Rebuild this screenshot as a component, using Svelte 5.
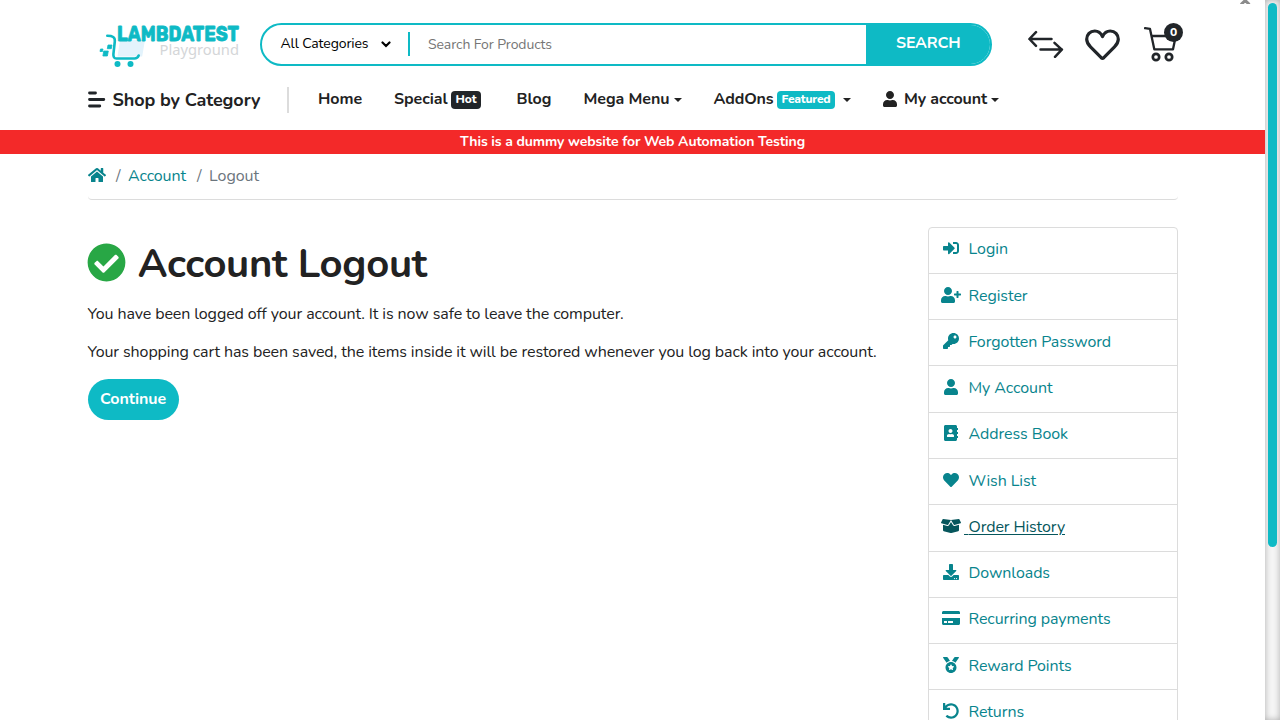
<script>
  const userPath = 'M224 256c70.7 0 128-57.3 128-128S294.7 0 224 0 96 57.3 96 128s57.3 128 128 128zm89.6 32h-16.7c-22.2 10.2-46.9 16-72.9 16s-50.6-5.8-72.9-16h-16.7C60.2 288 0 348.2 0 422.4V464c0 26.5 21.5 48 48 48h352c26.5 0 48-21.5 48-48v-41.6c0-74.2-60.2-134.4-134.4-134.4z';

  const icons = {
    user: [448, userPath],
    userPlus: [640, 'M624 208h-64v-64c0-8.8-7.2-16-16-16h-32c-8.8 0-16 7.2-16 16v64h-64c-8.8 0-16 7.2-16 16v32c0 8.8 7.2 16 16 16h64v64c0 8.8 7.2 16 16 16h32c8.8 0 16-7.2 16-16v-64h64c8.8 0 16-7.2 16-16v-32c0-8.8-7.2-16-16-16z' + userPath],
    signIn: [512, 'M416 448h-84c-6.6 0-12-5.4-12-12v-40c0-6.6 5.4-12 12-12h84c17.7 0 32-14.3 32-32V160c0-17.7-14.3-32-32-32h-84c-6.6 0-12-5.4-12-12V76c0-6.6 5.4-12 12-12h84c53 0 96 43 96 96v192c0 53-43 96-96 96zm-47-201L201 79c-15-15-41-4.5-41 17v96H24c-13.3 0-24 10.7-24 24v96c0 13.3 10.7 24 24 24h136v96c0 21.5 26 32 41 17l168-168c9.3-9.4 9.3-24.6 0-34z'],
    key: [512, 'M512 176.001C512 273.203 433.202 352 336 352c-11.22 0-22.19-1.062-32.827-3.069l-24.012 27.014A23.999 23.999 0 0 1 261.223 384H224v40c0 13.255-10.745 24-24 24h-40v40c0 13.255-10.745 24-24 24H24c-13.255 0-24-10.745-24-24v-78.059c0-6.365 2.529-12.47 7.029-16.971l161.802-161.802C163.108 213.814 160 195.271 160 176 160 78.798 238.797.001 335.999 0 433.488-.001 512 78.511 512 176.001zM336 128c0 26.51 21.49 48 48 48s48-21.49 48-48-21.49-48-48-48-48 21.49-48 48z'],
    book: [448, 'M436 160c6.6 0 12-5.4 12-12v-40c0-6.6-5.4-12-12-12h-20V48c0-26.5-21.5-48-48-48H48C21.5 0 0 21.5 0 48v416c0 26.5 21.5 48 48 48h320c26.5 0 48-21.5 48-48v-48h20c6.6 0 12-5.4 12-12v-40c0-6.6-5.4-12-12-12h-20v-64h20c6.6 0 12-5.4 12-12v-40c0-6.6-5.4-12-12-12h-20v-64h20zm-228-32c35.3 0 64 28.7 64 64s-28.7 64-64 64-64-28.7-64-64 28.7-64 64-64zm112 236.8c0 10.6-10 19.2-22.4 19.2H118.4C106 384 96 375.4 96 364.8v-19.2c0-31.8 30.1-57.6 67.2-57.6h5c12.3 5.1 25.7 8 39.8 8s27.6-2.9 39.8-8h5c37.1 0 67.2 25.8 67.2 57.6v19.2z'],
    heart: [512, 'M462.3 62.6C407.5 15.9 326 24.3 275.7 76.2L256 96.5l-19.7-20.3C186.1 24.3 104.5 15.9 49.7 62.6c-62.8 53.6-66.1 149.8-9.9 207.9l193.5 199.8c12.5 12.9 32.8 12.9 45.3 0l193.5-199.8c56.3-58.1 53-154.3-9.8-207.9z'],
    box: [640, 'M425.7 256c-16.9 0-32.8-9-41.4-23.4L320 126l-64.2 106.6c-8.7 14.5-24.6 23.5-41.5 23.5-4.5 0-9-.6-13.3-1.9L64 215v178c0 14.7 10 27.5 24.2 31l216.2 54.1c10.2 2.5 20.9 2.5 31 0L551.8 424c14.2-3.6 24.2-16.4 24.2-31V215l-137 39.1c-4.3 1.3-8.8 1.9-13.3 1.9zm212.6-112.2L586.8 41c-3.1-6.2-9.8-9.8-16.7-8.9L320 64l91.7 152.1c3.8 6.3 11.4 9.3 18.5 7.3l197.9-56.5c9.9-2.9 14.7-13.9 10.2-23.1zM53.2 41L1.7 143.8c-4.6 9.2.3 20.2 10.1 23l197.9 56.5c7.1 2 14.7-1 18.5-7.3L320 64 69.8 32.1c-6.9-.8-13.5 2.7-16.6 8.9z'],
    download: [512, 'M216 0h80c13.3 0 24 10.7 24 24v168h87.7c17.8 0 26.7 21.5 14.1 34.1L269.7 378.3c-7.5 7.5-19.8 7.5-27.3 0L90.1 226.1c-12.6-12.6-3.7-34.1 14.1-34.1H192V24c0-13.3 10.7-24 24-24zm296 376v112c0 13.3-10.7 24-24 24H24c-13.3 0-24-10.7-24-24V376c0-13.3 10.7-24 24-24h146.7l49 49c20.1 20.1 52.5 20.1 72.6 0l49-49H488c13.3 0 24 10.7 24 24zm-124 88c0-11-9-20-20-20s-20 9-20 20 9 20 20 20 20-9 20-20zm64 0c0-11-9-20-20-20s-20 9-20 20 9 20 20 20 20-9 20-20z'],
    card: [576, 'M0 432c0 26.5 21.5 48 48 48h480c26.5 0 48-21.5 48-48V256H0v176zm192-68c0-6.6 5.4-12 12-12h136c6.6 0 12 5.4 12 12v40c0 6.6-5.4 12-12 12H204c-6.6 0-12-5.4-12-12v-40zm-128 0c0-6.6 5.4-12 12-12h72c6.6 0 12 5.4 12 12v40c0 6.6-5.4 12-12 12H76c-6.6 0-12-5.4-12-12v-40zM576 80v48H0V80c0-26.5 21.5-48 48-48h480c26.5 0 48 21.5 48 48z'],
    medal: [512, 'M223.75 130.75L154.62 15.54A31.997 31.997 0 0 0 127.18 0H16.03C3.08 0-4.5 14.57 2.92 25.18l111.27 158.96c29.72-27.77 67.52-46.83 109.56-53.39zM495.97 0H384.82c-11.24 0-21.66 5.9-27.44 15.54l-69.13 115.21c42.04 6.56 79.84 25.62 109.56 53.38L509.08 25.18C516.5 14.57 508.92 0 495.97 0zM256 160c-97.2 0-176 78.8-176 176s78.8 176 176 176 176-78.8 176-176-78.8-176-176-176zm92.52 157.26l-37.93 36.96 8.97 52.22c1.6 9.36-8.26 16.51-16.65 12.09L256 393.88l-46.9 24.65c-8.4 4.45-18.25-2.74-16.65-12.09l8.97-52.22-37.93-36.96c-6.82-6.64-3.05-18.23 6.35-19.59l52.43-7.64 23.43-47.52c2.11-4.28 6.19-6.39 10.28-6.39 4.11 0 8.22 2.14 10.33 6.39l23.43 47.52 52.43 7.64c9.4 1.36 13.17 12.95 6.35 19.59z'],
    undo: [512, 'M212.333 224.333H12c-6.627 0-12-5.373-12-12V12C0 5.373 5.373 0 12 0h48c6.627 0 12 5.373 12 12v78.112C117.773 39.279 184.26 7.47 258.175 8.007c136.906.994 246.448 111.623 246.157 248.532C504.041 393.258 393.12 504 256.333 504c-64.089 0-122.496-24.313-166.51-64.215-5.099-4.622-5.334-12.554-.467-17.42l33.967-33.967c4.474-4.474 11.662-4.717 16.401-.525C170.76 415.336 211.58 432 256.333 432c97.268 0 176-78.716 176-176 0-97.267-78.716-176-176-176-58.496 0-110.28 28.476-142.274 72.333h98.274c6.627 0 12 5.373 12 12v48c0 6.627-5.373 12-12 12z'],
    home: [576, 'M280.37 148.26L96 300.11V464a16 16 0 0 0 16 16l112.06-.29a16 16 0 0 0 15.92-16V368a16 16 0 0 1 16-16h64a16 16 0 0 1 16 16v95.64a16 16 0 0 0 16 16.05L464 480a16 16 0 0 0 16-16V300L295.67 148.26a12.19 12.19 0 0 0-15.3 0zM571.6 251.47L488 182.56V44.05a12 12 0 0 0-12-12h-56a12 12 0 0 0-12 12v72.61L318.47 43a48 48 0 0 0-61 0L4.34 251.47a12 12 0 0 0-1.6 16.9l25.5 31A12 12 0 0 0 45.15 301l235.22-193.74a12.19 12.19 0 0 1 15.3 0L530.9 301a12 12 0 0 0 16.9-1.6l25.5-31a12 12 0 0 0-1.7-16.93z'],
    check: [512, 'M504 256c0 136.967-111.033 248-248 248S8 392.967 8 256 119.033 8 256 8s248 111.033 248 248zM227.314 387.314l184-184c6.248-6.248 6.248-16.379 0-22.627l-22.627-22.627c-6.248-6.248-16.379-6.249-22.628 0L216 308.118l-70.059-70.059c-6.248-6.248-16.379-6.248-22.628 0l-22.627 22.627c-6.248 6.248-6.248 16.379 0 22.627l104 104c6.249 6.249 16.379 6.249 22.628.001z']
  };

  const links = [
    ['Login', 'signIn', 39.5],
    ['Register', 'userPlus', 59],
    ['Forgotten Password', 'key', 142.5],
    ['My Account', 'user', 84],
    ['Address Book', 'book', 99.5],
    ['Wish List', 'heart', 67.5],
    ['Order History', 'box', 96.5],
    ['Downloads', 'download', 81.5],
    ['Recurring payments', 'card', 142],
    ['Reward Points', 'medal', 103],
    ['Returns', 'undo', 55.5]
  ];

  // Tracks a label so that it occupies the given width.
  function fit(node, width) {
    const natural = node.getBoundingClientRect().width;
    node.style.letterSpacing = `${(width - natural) / node.textContent.length}px`;
  }
</script>

{#snippet icon(name, height)}
  <svg class="fa" viewBox="0 0 {icons[name][0]} 512" width={(icons[name][0] / 512) * height} {height}>
    <path d={icons[name][1]} />
  </svg>
{/snippet}

<div class="page">
  <div class="view">
    <header class="top">
      <svg class="logo" width="144" height="48" viewBox="0 0 144 48">
        <path d="M21 20h25l-2.800 16.500H18.500z" fill="#e3f3fc" />
        <path d="M8.300 15.800c5.200 0 8 1.200 7.500 5.700L14.400 34q-.3 4.500 3 4.500H35.500q3 0 4.200-3" fill="none" stroke="#0ebac5" stroke-width="2.600" stroke-linecap="round" />
        <circle cx="18.500" cy="44" r="3" fill="#0ebac5" />
        <circle cx="31.500" cy="44" r="3" fill="#0ebac5" />
        <path d="M9 25h4l-.7 3.700H8.300zM4.700 31h4.600l-.9 5H3.900zM1.500 29h2.500l-.5 2.500H1z" fill="#0ebac5" stroke="#0ebac5" stroke-width=".8" stroke-linejoin="round" />
        <text class="brand" x="18" y="21" textLength="122" lengthAdjust="spacingAndGlyphs">LAMBDATEST</text>
        <text class="sub" x="60.500" y="35" textLength="79.500" lengthAdjust="spacingAndGlyphs">Playground</text>
      </svg>
      <div class="search">
        <div class="cat">
          <span use:fit={88}>All Categories</span>
          <svg width="10" height="7" viewBox="0 0 10 7"><path d="M1.500 1.500 5 5l3.500-3.500" fill="none" stroke="#000" stroke-width="2.200" stroke-linecap="round" /></svg>
        </div>
        <div class="query"><span use:fit={124}>Search For Products</span></div>
        <div class="go"><span use:fit={64.5}>SEARCH</span></div>
      </div>
      <div class="tools">
        <svg width="36" height="28" viewBox="0 0 36 28" fill="none" stroke="#212529" stroke-width="2.500" stroke-linecap="round" stroke-linejoin="round"><path d="M23.500 9H1.500M8 2.200 1.400 9 8 15.800M12.500 19.600h21.500M26.500 12.800l7.300 6.800-6.800 7.200" /></svg>
        <svg width="36" height="32" viewBox="0 0 36 32" fill="none" stroke="#212529" stroke-width="3.200" stroke-linejoin="round"><path d="M17.500 7.500C15.800 4 13 2 9.800 2 5 2 1.700 5.600 1.700 10.300c0 3.200 1.600 5.400 3.800 7.600L16.200 28.700q1.300 1.200 2.600 0L29.500 17.900c2.200-2.200 3.800-4.400 3.800-7.600C33.300 5.600 30 2 25.200 2 22 2 19.200 4 17.500 7.500Z" /></svg>
        <div class="cart">
          <svg width="36" height="36" viewBox="0 0 36 36" fill="none" stroke="#212529" stroke-width="2.300" stroke-linecap="round" stroke-linejoin="round"><path d="M1 2.200l5 .7L10.300 23.300H29l2.800-13.300H7.800" /><circle cx="12" cy="31" r="3.200" stroke-width="2.700" /><circle cx="25" cy="31" r="3.200" stroke-width="2.700" /></svg>
          <b>0</b>
        </div>
      </div>
    </header>

    <nav>
      <svg class="bars" width="18" height="17" viewBox="0 0 18 17" stroke="#212529" stroke-width="2.800" stroke-linecap="round"><path d="M1.500 2h6M1.500 8.500h14.300M1.500 15h10.300" /></svg>
      <span class="shop" use:fit={148}>Shop by Category</span>
      <i class="rule"></i>
      <span class="home" use:fit={44}>Home</span>
      <span class="gap32" use:fit={53.5}>Special</span>
      <em class="hot"><span use:fit={21}>Hot</span></em>
      <span class="blog" use:fit={35}>Blog</span>
      <span class="gap32" use:fit={86}>Mega Menu</span>
      <i class="caret"></i>
      <span class="gap32" use:fit={60}>AddOns</span>
      <em class="featured"><span use:fit={49}>Featured</span></em>
      <i class="caret wide"></i>
      <span class="person">{@render icon('user', 16)}</span>
      <span class="account" use:fit={83}>My account</span>
      <i class="caret"></i>
    </nav>

    <div class="notice"><span use:fit={345}>This is a dummy website for Web Automation Testing</span></div>

    <main>
      <div class="crumbs">
        <a class="homeicon" href="#home" aria-label="Home">{@render icon('home', 16)}</a>
        <span class="slash">/</span>
        <a href="#account"><span use:fit={58}>Account</span></a>
        <span class="slash second">/</span>
        <span class="here" use:fit={50}>Logout</span>
      </div>

      <div class="columns">
        <section>
          <h1>{@render icon('check', 39)}<span use:fit={289}>Account Logout</span></h1>
          <p><span use:fit={536}>You have been logged off your account. It is now safe to leave the computer.</span></p>
          <p><span use:fit={789}>Your shopping cart has been saved, the items inside it will be restored whenever you log back into your account.</span></p>
          <div class="btn"><span use:fit={66}>Continue</span></div>
        </section>
        <aside>
          {#each links as [label, name, width]}
            <div class="row" class:hover={name === 'box'}>
              <span class="slot">{@render icon(name, 16)}</span>
              <span class="label"><span use:fit={width}>{label}</span></span>
            </div>
          {/each}
        </aside>
      </div>
    </main>
    <svg class="peek" width="12" height="4" viewBox="0 0 12 4"><path d="M2 4.500 6.200.500l4.200 4" fill="none" stroke="#8b8b8b" stroke-width="3" /></svg>
  </div>
  <div class="track"><div class="thumb"></div></div>
</div>

<style>
  :global(body) { margin: 0; background: #fff; }
  .page { display: flex; width: 1280px; height: 720px; overflow: hidden; font: 16px/24px Nunito, Lato, "Open Sans", sans-serif; color: #222; position: relative; }
  .page * { box-sizing: border-box; }
  .view { width: 1265px; height: 720px; overflow: hidden; }
  svg { display: block; flex: none; }
  span { white-space: nowrap; }
  .fa path { fill: currentColor; }
  .top { display: flex; padding: 20px 0 0 99px; height: 73px; }
  .logo { overflow: visible; }
  .brand { font: 700 20px Rubik, Inter, sans-serif; fill: #0ebac5; stroke: #0ebac5; stroke-width: .8; }
  .sub { font: 14.500px "Noto Sans", sans-serif; fill: #d4d6d8; }
  .search { display: flex; width: 732px; height: 43px; margin: 3px 0 0 17px; border: 2px solid #0ebac5; border-radius: 22px; overflow: hidden; font-size: 14px; }
  .cat { display: flex; align-items: center; gap: 12px; width: 148px; height: 24px; margin-top: 7px; padding: 0 0 0 18.500px; border-right: 2px solid #0ebac5; color: #000; }
  .query { flex: 1; padding: 8px 0 0 18px; color: #757575; }
  .go { width: 124px; background: #0ebac5; color: #fff; font-weight: 700; font-size: 16px; padding: 6px 0 0 30px; }
  .tools { display: flex; margin-left: 36px; }
  .tools > svg:first-child { margin-top: 10px; }
  .tools > svg:nth-child(2) { margin: 9px 0 0 21px; }
  .cart { position: relative; margin: 6px 0 0 23px; }
  .cart b { position: absolute; left: 20px; top: -3px; width: 19px; height: 19px; border-radius: 50%; background: #212529; color: #fff; font-size: 12px; font-weight: 800; line-height: 19px; text-align: center; }
  nav { display: flex; align-items: center; height: 57px; padding: 0 0 6px 87.500px; font-weight: 700; }
  .bars { margin-top: 2px; }
  .shop { font-size: 18px; margin: 2px 0 0 7px; }
  .rule { width: 2px; height: 26px; background: #dcdcdc; margin: 3px 0 0 26px; }
  .home { margin-left: 29.500px; }
  .gap32 { margin-left: 32px; }
  .blog { margin-left: 35.500px; }
  em { font-style: normal; font-size: 12px; font-weight: 800; line-height: 17px; height: 18px; color: #fff; border-radius: 4px; padding: 0 4.500px; margin: 3px 0 0 3.500px; background: #212529; }
  .hot { width: 30px; }
  .featured { width: 58px; background: #0ebac5; }
  .caret { border: 4.500px solid transparent; border-top-color: currentColor; border-bottom: 0; border-top-width: 4px; margin: 3px 0 0 4px; }
  .caret.wide { margin-left: 8px; }
  .person { margin-left: 32px; }
  .account { margin-left: 7px; }
  .notice { height: 24px; background: #f32929; color: #fff; font-weight: 700; font-size: 14px; line-height: 23px; text-align: center; }
  main { width: 1090px; margin-left: 87.500px; }
  .crumbs { display: flex; height: 46px; padding-top: 10px; border-bottom: 1px solid #dcdcdc; border-radius: 4px; }
  a { color: #08848d; text-decoration: none; }
  .homeicon { margin-top: 3px; width: 18px; }
  .slash { color: #6c757d; width: 12px; margin-left: 10.500px; }
  .slash.second { margin-left: 11px; }
  .here { color: #6c757d; }
  .columns { display: flex; justify-content: space-between; padding-top: 26.560px; }
  h1 { display: flex; align-items: center; font-size: 40px; line-height: 48px; margin: 13.500px 0 14px; gap: 11.500px; }
  h1 .fa { color: #28a745; margin: -3px 0 0 -.2px; }
  p { margin: 0 0 14px; }
  .btn { width: 91px; height: 41px; border-radius: 21px; background: #0ebac5; color: #fff; font-weight: 700; line-height: 40px; text-align: center; margin-top: 15px; }
  aside { width: 250px; border: 1px solid #dcdcdc; border-radius: 4px; height: 600px; }
  .row { display: flex; height: 46.290px; border-bottom: 1px solid #dcdcdc; padding: 9.700px 0 0 12px; color: #08848d; }
  .slot { width: 20px; height: 20px; display: flex; justify-content: center; margin-top: 3px; }
  .label { padding-left: 8px; }
  .hover { color: #06565c; }
  .hover .label { padding-left: 3.500px; }
  .hover .label::before { content: "\a0"; display: inline-block; width: 4.500px; text-decoration: underline; }
  .hover .label { text-decoration: underline; text-underline-offset: 2px; }
  .peek { position: absolute; left: 1239px; top: 0; }
  .track { width: 15px; height: 720px; padding: 3px; background: #f5f5f5; box-shadow: inset 0 0 6px rgba(0,0,0,.3); }
  .thumb { width: 9px; height: 544px; border-radius: 10px; background: #0ebac5; }
</style>
